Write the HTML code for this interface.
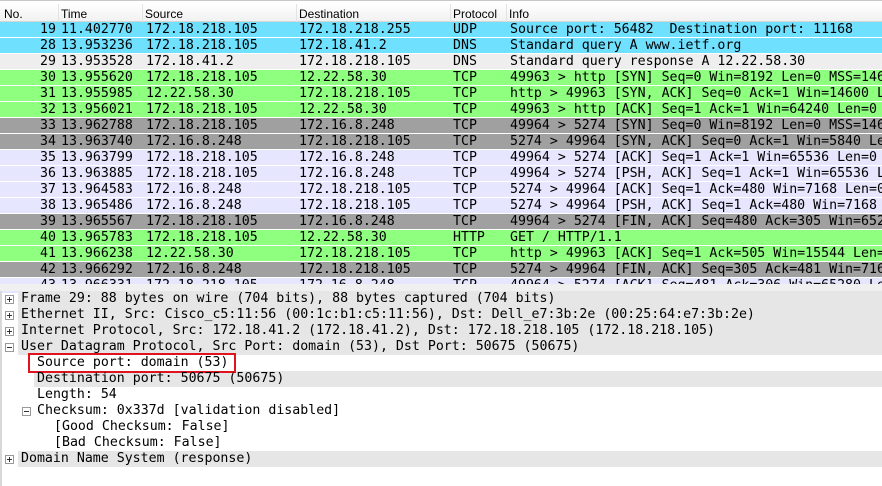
<!DOCTYPE html>
<html><head><meta charset="utf-8"><style>
*{margin:0;padding:0;box-sizing:border-box}
body{width:882px;height:486px;overflow:hidden;background:#fff;position:relative;font-family:"DejaVu Sans Mono","Liberation Mono",monospace;font-size:13.25px;color:#000}
.top{position:absolute;left:0;top:0;width:882px;height:4px;background:linear-gradient(#c8c8c8 0,#c8c8c8 1px,#fff 1px)}
.hdr{position:absolute;left:0;top:4px;width:882px;height:18px;background:linear-gradient(#fff,#f1f1f1);border-bottom:1px solid #d5d5d5;font-family:"Liberation Sans",sans-serif;font-size:12px}
.hdr span{position:absolute;top:3px}
.hdr i{position:absolute;top:0;width:1px;height:18px;background:#e3e3e3}
.row{position:absolute;left:0;width:882px;height:15px;white-space:pre;line-height:15px;overflow:hidden}
.row span{position:absolute;top:0}
.no{left:0;width:56px;text-align:right}
.b{background:#70e0ff}.g{background:#8eff7f}.d{background:#a0a0a0}.l{background:#e7e6ff}.w{background:#eeeeee}
.split{position:absolute;left:0;top:284px;width:882px;height:7px;background:#f0f0f0}
.det{position:absolute;left:0;height:16px;line-height:16px;white-space:pre;overflow:hidden}
.det.s{background:#e6e6e6}
.pm{position:absolute;width:9px;height:9px;border:1px solid #999;background:#fff}
.pm:before{content:"";position:absolute;left:1px;top:3px;width:5px;height:1px;background:#333}
.pm.p:after{content:"";position:absolute;left:3px;top:1px;width:1px;height:5px;background:#333}
.vl{position:absolute;left:0;top:291px;width:2px;height:195px;background:#d8d8d8}
</style></head><body>
<div class="top"></div>
<div class="hdr">
<span style="left:4px">No.</span><i style="left:58px"></i>
<span style="left:61px">Time</span><i style="left:142px"></i>
<span style="left:145px">Source</span><i style="left:296px"></i>
<span style="left:299px">Destination</span><i style="left:450px"></i>
<span style="left:453px">Protocol</span><i style="left:506px"></i>
<span style="left:509px">Info</span>
</div>
<div class="row b" style="top:22px"><span class="no">19</span><span style="left:61px">11.402770</span><span style="left:146px">172.18.218.105</span><span style="left:299px">172.18.218.255</span><span style="left:453px">UDP</span><span style="left:510px">Source port: 56482  Destination port: 11168</span></div>
<div class="row b" style="top:38px"><span class="no">28</span><span style="left:61px">13.953236</span><span style="left:146px">172.18.218.105</span><span style="left:299px">172.18.41.2</span><span style="left:453px">DNS</span><span style="left:510px">Standard query A www.ietf.org</span></div>
<div class="row w" style="top:54px"><span class="no">29</span><span style="left:61px">13.953528</span><span style="left:146px">172.18.41.2</span><span style="left:299px">172.18.218.105</span><span style="left:453px">DNS</span><span style="left:510px">Standard query response A 12.22.58.30</span></div>
<div class="row g" style="top:70px"><span class="no">30</span><span style="left:61px">13.955620</span><span style="left:146px">172.18.218.105</span><span style="left:299px">12.22.58.30</span><span style="left:453px">TCP</span><span style="left:510px">49963 &gt; http [SYN] Seq=0 Win=8192 Len=0 MSS=1460</span></div>
<div class="row g" style="top:86px"><span class="no">31</span><span style="left:61px">13.955985</span><span style="left:146px">12.22.58.30</span><span style="left:299px">172.18.218.105</span><span style="left:453px">TCP</span><span style="left:510px">http &gt; 49963 [SYN, ACK] Seq=0 Ack=1 Win=14600 Len=0</span></div>
<div class="row g" style="top:102px"><span class="no">32</span><span style="left:61px">13.956021</span><span style="left:146px">172.18.218.105</span><span style="left:299px">12.22.58.30</span><span style="left:453px">TCP</span><span style="left:510px">49963 &gt; http [ACK] Seq=1 Ack=1 Win=64240 Len=0</span></div>
<div class="row d" style="top:118px"><span class="no">33</span><span style="left:61px">13.962788</span><span style="left:146px">172.18.218.105</span><span style="left:299px">172.16.8.248</span><span style="left:453px">TCP</span><span style="left:510px">49964 &gt; 5274 [SYN] Seq=0 Win=8192 Len=0 MSS=1460</span></div>
<div class="row d" style="top:134px"><span class="no">34</span><span style="left:61px">13.963740</span><span style="left:146px">172.16.8.248</span><span style="left:299px">172.18.218.105</span><span style="left:453px">TCP</span><span style="left:510px">5274 &gt; 49964 [SYN, ACK] Seq=0 Ack=1 Win=5840 Len=0</span></div>
<div class="row l" style="top:150px"><span class="no">35</span><span style="left:61px">13.963799</span><span style="left:146px">172.18.218.105</span><span style="left:299px">172.16.8.248</span><span style="left:453px">TCP</span><span style="left:510px">49964 &gt; 5274 [ACK] Seq=1 Ack=1 Win=65536 Len=0</span></div>
<div class="row l" style="top:166px"><span class="no">36</span><span style="left:61px">13.963885</span><span style="left:146px">172.18.218.105</span><span style="left:299px">172.16.8.248</span><span style="left:453px">TCP</span><span style="left:510px">49964 &gt; 5274 [PSH, ACK] Seq=1 Ack=1 Win=65536 Len=479</span></div>
<div class="row l" style="top:182px"><span class="no">37</span><span style="left:61px">13.964583</span><span style="left:146px">172.16.8.248</span><span style="left:299px">172.18.218.105</span><span style="left:453px">TCP</span><span style="left:510px">5274 &gt; 49964 [ACK] Seq=1 Ack=480 Win=7168 Len=0</span></div>
<div class="row l" style="top:198px"><span class="no">38</span><span style="left:61px">13.965486</span><span style="left:146px">172.16.8.248</span><span style="left:299px">172.18.218.105</span><span style="left:453px">TCP</span><span style="left:510px">5274 &gt; 49964 [PSH, ACK] Seq=1 Ack=480 Win=7168 Len=304</span></div>
<div class="row d" style="top:214px"><span class="no">39</span><span style="left:61px">13.965567</span><span style="left:146px">172.18.218.105</span><span style="left:299px">172.16.8.248</span><span style="left:453px">TCP</span><span style="left:510px">49964 &gt; 5274 [FIN, ACK] Seq=480 Ack=305 Win=65232</span></div>
<div class="row g" style="top:230px"><span class="no">40</span><span style="left:61px">13.965783</span><span style="left:146px">172.18.218.105</span><span style="left:299px">12.22.58.30</span><span style="left:453px">HTTP</span><span style="left:510px">GET / HTTP/1.1</span></div>
<div class="row g" style="top:246px"><span class="no">41</span><span style="left:61px">13.966238</span><span style="left:146px">12.22.58.30</span><span style="left:299px">172.18.218.105</span><span style="left:453px">TCP</span><span style="left:510px">http &gt; 49963 [ACK] Seq=1 Ack=505 Win=15544 Len=0</span></div>
<div class="row d" style="top:262px"><span class="no">42</span><span style="left:61px">13.966292</span><span style="left:146px">172.16.8.248</span><span style="left:299px">172.18.218.105</span><span style="left:453px">TCP</span><span style="left:510px">5274 &gt; 49964 [FIN, ACK] Seq=305 Ack=481 Win=7168</span></div>
<div class="row l" style="top:278px"><span class="no">43</span><span style="left:61px">13.966331</span><span style="left:146px">172.18.218.105</span><span style="left:299px">172.16.8.248</span><span style="left:453px">TCP</span><span style="left:510px">49964 &gt; 5274 [ACK] Seq=481 Ack=306 Win=65280 Len=0</span></div>
<div class="split"></div>
<div class="vl"></div>
<div class="det s" style="top:291px;left:18px;width:864px"><span style="margin-left:3px">Frame 29: 88 bytes on wire (704 bits), 88 bytes captured (704 bits)</span></div><div class="pm p" style="left:5px;top:295px"></div>
<div class="det s" style="top:307px;left:18px;width:864px"><span style="margin-left:3px">Ethernet II, Src: Cisco_c5:11:56 (00:1c:b1:c5:11:56), Dst: Dell_e7:3b:2e (00:25:64:e7:3b:2e)</span></div><div class="pm p" style="left:5px;top:311px"></div>
<div class="det s" style="top:323px;left:18px;width:864px"><span style="margin-left:3px">Internet Protocol, Src: 172.18.41.2 (172.18.41.2), Dst: 172.18.218.105 (172.18.218.105)</span></div><div class="pm p" style="left:5px;top:327px"></div>
<div class="det s" style="top:339px;left:18px;width:864px"><span style="margin-left:3px">User Datagram Protocol, Src Port: domain (53), Dst Port: 50675 (50675)</span></div><div class="pm" style="left:5px;top:343px"></div>
<div class="det" style="top:355px;left:37px">Source port: domain (53)</div>
<div style="position:absolute;left:28px;top:353px;width:208px;height:20px;border:2px solid #e0141e"></div>
<div class="det s" style="top:371px;left:34px;width:848px;z-index:-1"></div>
<div class="det" style="top:371px;left:37px">Destination port: 50675 (50675)</div>
<div class="det" style="top:387px;left:37px">Length: 54</div>
<div class="det" style="top:403px;left:37px">Checksum: 0x337d [validation disabled]</div><div class="pm" style="left:22px;top:407px"></div>
<div class="det" style="top:419px;left:54px">[Good Checksum: False]</div>
<div class="det" style="top:435px;left:54px">[Bad Checksum: False]</div>
<div class="det s" style="top:451px;left:18px;width:864px"><span style="margin-left:3px">Domain Name System (response)</span></div><div class="pm p" style="left:5px;top:455px"></div>
</body></html>
